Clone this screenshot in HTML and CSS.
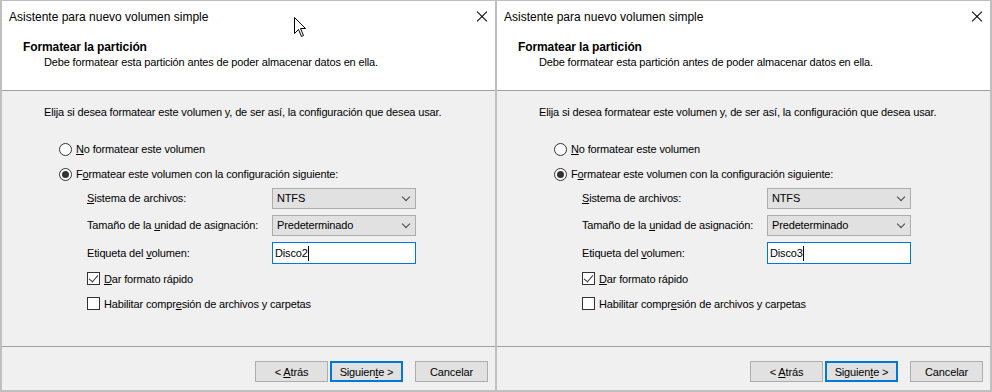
FILE: index.html
```html
<!DOCTYPE html>
<html lang="es">

<head>
	<meta charset="UTF-8">
	<title>Asistente para nuevo volumen simple</title>
	<link rel="stylesheet" href="styles.css">
</head>

<body>

	<div class="screen">

		<div class="dialog">
			<div class="top">
				<div class="titlebar">
					<span class="title">Asistente para nuevo volumen simple</span>
					<span class="close"></span>
				</div>
				<div class="heading">Formatear la partición</div>
				<div class="subheading">Debe formatear esta partición antes de poder almacenar datos en ella.</div>
			</div>
			<div class="rule"></div>
			<div class="content">
				<p class="intro">Elija si desea formatear este volumen y, de ser así, la configuración que desea usar.</p>
				<div class="option first"><span class="radio"></span><span><u>N</u>o formatear este volumen</span></div>
				<div class="option"><span class="radio checked"></span><span>F<u>o</u>rmatear este volumen con la configuración siguiente:</span></div>
				<div class="settings">
					<label class="field-label"><u>S</u>istema de archivos:</label>
					<div class="select">NTFS<span class="chevron"></span></div>
					<label class="field-label">Tamaño de la <u>u</u>nidad de asignación:</label>
					<div class="select">Predeterminado<span class="chevron"></span></div>
					<label class="field-label">Etiqueta del <u>v</u>olumen:</label>
					<div class="textbox">Disco2<span class="caret"></span></div>
				</div>
				<div class="check-row first"><span class="checkbox checked"></span><span><u>D</u>ar formato rápido</span></div>
				<div class="check-row"><span class="checkbox"></span><span>Habilitar compr<u>e</u>sión de archivos y carpetas</span></div>
			</div>
			<div class="rule"></div>
			<div class="footer">
				<button class="btn">&lt; <u>A</u>trás</button>
				<button class="btn default">Siguien<u>t</u>e &gt;</button>
				<button class="btn cancel">Cancelar</button>
			</div>

			<svg class="pointer" width="14" height="21" viewBox="0 0 14 21">
				<path d="M0.5 0.5 L0.5 16.5 L4.5 12.5 L7.5 19.5 L9.5 18.5 L6.5 11.5 L11.5 11.5 Z" fill="#fff" stroke="#000" stroke-width="1" />
			</svg>
		</div>

		<div class="dialog">
			<div class="top">
				<div class="titlebar">
					<span class="title">Asistente para nuevo volumen simple</span>
					<span class="close"></span>
				</div>
				<div class="heading">Formatear la partición</div>
				<div class="subheading">Debe formatear esta partición antes de poder almacenar datos en ella.</div>
			</div>
			<div class="rule"></div>
			<div class="content">
				<p class="intro">Elija si desea formatear este volumen y, de ser así, la configuración que desea usar.</p>
				<div class="option first"><span class="radio"></span><span><u>N</u>o formatear este volumen</span></div>
				<div class="option"><span class="radio checked"></span><span>F<u>o</u>rmatear este volumen con la configuración siguiente:</span></div>
				<div class="settings">
					<label class="field-label"><u>S</u>istema de archivos:</label>
					<div class="select">NTFS<span class="chevron"></span></div>
					<label class="field-label">Tamaño de la <u>u</u>nidad de asignación:</label>
					<div class="select">Predeterminado<span class="chevron"></span></div>
					<label class="field-label">Etiqueta del <u>v</u>olumen:</label>
					<div class="textbox">Disco3<span class="caret"></span></div>
				</div>
				<div class="check-row first"><span class="checkbox checked"></span><span><u>D</u>ar formato rápido</span></div>
				<div class="check-row"><span class="checkbox"></span><span>Habilitar compr<u>e</u>sión de archivos y carpetas</span></div>
			</div>
			<div class="rule"></div>
			<div class="footer">
				<button class="btn">&lt; <u>A</u>trás</button>
				<button class="btn default">Siguien<u>t</u>e &gt;</button>
				<button class="btn cancel">Cancelar</button>
			</div>
		</div>

	</div>

</body>

</html>
```

FILE: styles.css
```css
body {
	margin: 0;
	font-family: 'Liberation Sans', Arial, sans-serif;
	font-size: 11px;
	letter-spacing: -0.15px;
	color: #000;
	background-color: #bfbfbf;
}

.screen {
	display: flex;
	gap: 2px;
	width: 992px;
	height: 392px;
	box-sizing: border-box;
	padding: 1px 2px 2px 2px;
	background-color: #bfbfbf;
}

.dialog {
	position: relative;
	width: 493px;
	height: 389px;
	display: flex;
	flex-direction: column;
	background-color: #f0f0f0;
}

.top {
	height: 89px;
	background-color: #fff;
}

.titlebar {
	height: 31px;
	display: flex;
	align-items: center;
	justify-content: space-between;
	padding: 0 7px;
}

.title {
	font-size: 12px;
	letter-spacing: 0;
}

/* thin X made of two rotated lines */
.close {
	position: relative;
	width: 12px;
	height: 12px;
}

.close::before,
.close::after {
	content: '';
	position: absolute;
	left: -1px;
	top: 5px;
	width: 14px;
	height: 1px;
	background-color: #000;
	transform: rotate(45deg);
}

.close::after {
	transform: rotate(-45deg);
}

.heading {
	margin-top: 8px;
	padding-left: 21px;
	font-size: 12px;
	font-weight: bold;
	letter-spacing: -0.1px;
	line-height: 15px;
}

.subheading {
	padding-left: 42px;
	line-height: 15px;
}

.rule {
	height: 1px;
	background-color: #a0a0a0;
}

.content {
	flex: 1;
	padding: 14px 0 0 42px;
}

.intro {
	margin: 0;
	line-height: 15px;
}

.option {
	display: flex;
	align-items: center;
	height: 16px;
	margin-top: 9px;
	padding-left: 15px;
	gap: 4px;
}

.option.first {
	margin-top: 21px;
}

.radio {
	width: 11px;
	height: 11px;
	border: 1px solid #333;
	border-radius: 50%;
	background-color: #fff;
	display: flex;
	align-items: center;
	justify-content: center;
}

.radio.checked::after {
	content: '';
	width: 7px;
	height: 7px;
	border-radius: 50%;
	background-color: #333;
}

.settings {
	display: grid;
	grid-template-columns: 185px 144px;
	row-gap: 6px;
	margin-top: 6px;
	padding-left: 43px;
	align-items: center;
}

.field-label {
	line-height: 15px;
}

.select {
	position: relative;
	height: 21px;
	box-sizing: border-box;
	border: 1px solid #adadad;
	background-color: #e1e1e1;
	padding-left: 4px;
	line-height: 19px;
}

.chevron {
	position: absolute;
	right: 6px;
	top: 5px;
	width: 5px;
	height: 5px;
	border-right: 1px solid #444;
	border-bottom: 1px solid #444;
	transform: rotate(45deg);
}

.textbox {
	height: 22px;
	box-sizing: border-box;
	border: 1px solid #0078d7;
	background-color: #fff;
	padding-left: 2px;
	line-height: 20px;
	display: flex;
	align-items: center;
}

.caret {
	width: 1px;
	height: 15px;
	background-color: #000;
}

.check-row {
	display: flex;
	align-items: center;
	height: 15px;
	margin-top: 7px;
	padding-left: 43px;
	gap: 4px;
}

.check-row + .check-row {
	margin-top: 10px;
}

.checkbox {
	position: relative;
	width: 11px;
	height: 11px;
	border: 1px solid #333;
	background-color: #fff;
}

.checkbox.checked::after {
	content: '';
	position: absolute;
	left: 3px;
	top: 0px;
	width: 4px;
	height: 8px;
	border-right: 1px solid #333;
	border-bottom: 1px solid #333;
	transform: rotate(40deg);
}

.footer {
	height: 43px;
	box-sizing: border-box;
	display: flex;
	justify-content: flex-end;
	align-items: flex-start;
	padding: 14px 7px 0 0;
}

.btn {
	width: 73px;
	height: 21px;
	box-sizing: border-box;
	margin: 0 0 0 2px;
	padding: 0;
	border: 1px solid #adadad;
	background-color: #e1e1e1;
	font-family: inherit;
	font-size: 11px;
	letter-spacing: -0.15px;
	color: #000;
}

.btn.default {
	border: 2px solid #0078d7;
}

.btn.cancel {
	margin-left: 12px;
}

.pointer {
	position: absolute;
	left: 292px;
	top: 16px;
}
```
